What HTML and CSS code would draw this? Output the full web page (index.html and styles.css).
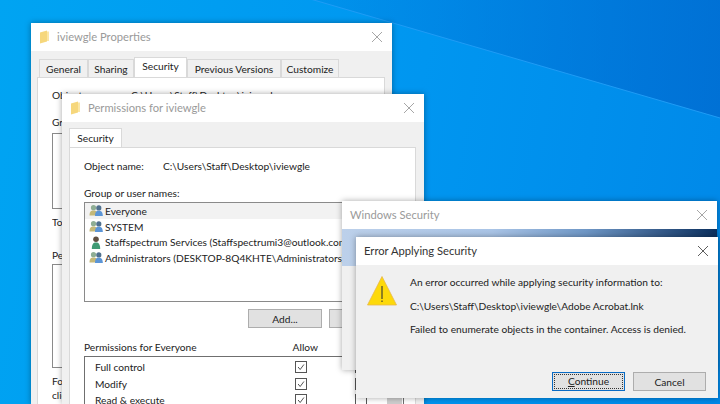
FILE: index.html
```html
<!DOCTYPE html>
<html lang="en">
<head>
    <meta charset="UTF-8">
    <title>Error Applying Security</title>
    <link rel="stylesheet" href="styles.css">
</head>
<body>
    <svg class="streak" viewBox="0 0 720 404">
        <defs>
            <linearGradient id="wedge" x1="0" y1="0" x2="1" y2="0">
                <stop offset="0" stop-color="#0060c8" stop-opacity="0.1"/>
                <stop offset="1" stop-color="#0060c8" stop-opacity="0.6"/>
            </linearGradient>
        </defs>
        <polygon points="300,-4 720,118 720,0 300,0" fill="url(#wedge)"/>
        <line x1="300" y1="-4" x2="720" y2="118" stroke="#1f9cf5" stroke-width="1"/>
    </svg>

    <!-- back window -->
    <div class="window props">
        <div class="titlebar dim">
            <svg class="folder" viewBox="0 0 12 14"><path d="M1 2.5 L8 0.5 V11.5 L1 13.5 Z" fill="#f6d77c"/><path d="M8 1.5 H10 V11 H8 Z" fill="#fbe6a4"/></svg>
            <span class="title">iviewgle Properties</span>
            <svg class="close" viewBox="0 0 10 10"><path d="M0 0 L10 10 M10 0 L0 10"/></svg>
        </div>
        <div class="tabs">
            <span class="tab w-general">General</span>
            <span class="tab w-sharing">Sharing</span>
            <span class="tab active w-security">Security</span>
            <span class="tab w-previous">Previous Versions</span>
            <span class="tab w-customize">Customize</span>
        </div>
        <div class="panel props-panel">
            <div class="row-name"><span class="name-label">Object name:</span><span>C:\Users\Staff\Desktop\iviewgle</span></div>
            <p class="cut gr">Group or user names:</p>
            <div class="props-list"></div>
            <p class="cut to">To change permissions</p>
            <p class="cut pe">Permissions for Everyone</p>
            <div class="props-list tall"></div>
            <p class="cut fo">For special permissions</p>
            <p class="cut">click Advanced.</p>
        </div>
    </div>

    <!-- permissions window -->
    <div class="window perms">
        <div class="titlebar dim">
            <svg class="folder" viewBox="0 0 12 14"><path d="M1 2.5 L8 0.5 V11.5 L1 13.5 Z" fill="#f6d77c"/><path d="M8 1.5 H10 V11 H8 Z" fill="#fbe6a4"/></svg>
            <span class="title">Permissions for iviewgle</span>
            <svg class="close" viewBox="0 0 10 10"><path d="M0 0 L10 10 M10 0 L0 10"/></svg>
        </div>
        <div class="tabs perms-tabs">
            <span class="tab active">Security</span>
        </div>
        <div class="panel perms-panel">
            <div class="row-name"><span class="name-label">Object name:</span><span>C:\Users\Staff\Desktop\iviewgle</span></div>
            <p class="group-label">Group or user names:</p>
            <ul class="users">
                <li class="user selected"><svg class="ico"><use href="#group"/></svg>Everyone</li>
                <li class="user"><svg class="ico"><use href="#group"/></svg>SYSTEM</li>
                <li class="user"><svg class="ico"><use href="#single"/></svg>Staffspectrum Services (Staffspectrumi3@outlook.com)</li>
                <li class="user"><svg class="ico"><use href="#group"/></svg>Administrators (DESKTOP-8Q4KHTE\Administrators)</li>
            </ul>
            <div class="add-row">
                <span class="btn">Add...</span>
                <span class="btn">Remove</span>
            </div>
            <div class="perm-head"><span>Permissions for Everyone</span><span class="allow">Allow</span></div>
            <div class="perm-box">
                <div class="perm"><span class="perm-name">Full control</span><svg class="check" viewBox="0 0 12 12"><path d="M2.5 6 L5 9 L9.5 3"/></svg><span class="deny"></span></div>
                <div class="perm"><span class="perm-name">Modify</span><svg class="check" viewBox="0 0 12 12"><path d="M2.5 6 L5 9 L9.5 3"/></svg><span class="deny"></span></div>
                <div class="perm"><span class="perm-name">Read &amp; execute</span><svg class="check" viewBox="0 0 12 12"><path d="M2.5 6 L5 9 L9.5 3"/></svg><span class="deny"></span></div>
                <div class="thumb"></div>
            </div>
        </div>
    </div>

    <!-- windows security -->
    <div class="window winsec">
        <div class="titlebar dim">
            <span class="title">Windows Security</span>
            <svg class="close" viewBox="0 0 10 10"><path d="M0 0 L10 10 M10 0 L0 10"/></svg>
        </div>
        <div class="band"></div>
    </div>

    <!-- error dialog -->
    <div class="window error">
        <div class="titlebar">
            <span class="title">Error Applying Security</span>
            <svg class="close dark" viewBox="0 0 10 10"><path d="M0 0 L10 10 M10 0 L0 10"/></svg>
        </div>
        <div class="error-body">
            <div class="msg-row">
                <svg class="warn" viewBox="0 0 30 30">
                    <path d="M15 0.5 L29.5 29 H0.5 Z" fill="#fdd90a" stroke="#e8b84a" stroke-width="0.8"/>
                    <path d="M15 10 V23" stroke="#333" stroke-width="1.1"/>
                    <path d="M15 24.5 V26" stroke="#333" stroke-width="1.1"/>
                </svg>
                <div class="msgs">
                    <p>An error occurred while applying security information to:</p>
                    <p>C:\Users\Staff\Desktop\iviewgle\Adobe Acrobat.lnk</p>
                    <p>Failed to enumerate objects in the container. Access is denied.</p>
                </div>
            </div>
            <div class="actions">
                <span class="btn primary"><span class="focus"><u>C</u>ontinue</span></span>
                <span class="btn">Cancel</span>
            </div>
        </div>
    </div>

    <svg class="defs" width="0" height="0">
        <symbol id="group" viewBox="0 0 14 12">
            <circle cx="4.5" cy="3.2" r="2.6" fill="#8fae94"/>
            <path d="M0.5 11 C0.5 7 2 6 4.5 6 C7 6 8.5 7 8.5 11 Z" fill="#c4b878"/>
            <circle cx="9.8" cy="3.4" r="2.6" fill="#4f708e"/>
            <path d="M6 11.5 C6 7.5 7.5 6.3 9.8 6.3 C12 6.3 13.8 7.5 13.8 11.5 Z" fill="#5b95d6"/>
        </symbol>
        <symbol id="single" viewBox="0 0 14 14">
            <circle cx="7" cy="3.5" r="3" fill="#5f4f40"/>
            <path d="M2.5 14 C2.5 9 4 7 7 7 C10 7 11.5 9 11.5 14 Z" fill="#3f9a74"/>
        </symbol>
    </svg>
</body>
</html>
```
FILE: styles.css
```css
html, body {
    margin: 0;
    padding: 0;
}
body {
    width: 720px;
    height: 404px;
    overflow: hidden;
    position: relative;
    font-family: Lato, sans-serif;
    font-size: 10.2px;
    line-height: 14px;
    color: #222;
    background: linear-gradient(100deg, #00a4f2 0%, #0096f0 55%, #0088e8 100%);
}
p {
    margin: 0;
}
.streak {
    position: absolute;
    left: 0;
    top: 0;
    width: 720px;
    height: 404px;
}
.defs {
    position: absolute;
}
.window {
    position: absolute;
    background: #f0f0f0;
    box-shadow: 0 0 6px rgba(0, 0, 0, 0.35);
    overflow: hidden;
}
.props {
    left: 31px;
    top: 23px;
    width: 361px;
    height: 381px;
}
.perms {
    left: 62px;
    top: 94px;
    width: 362px;
    height: 310px;
}
.winsec {
    left: 342px;
    top: 201px;
    width: 375px;
    height: 169px;
}
.error {
    left: 356px;
    top: 237px;
    width: 362px;
    height: 161px;
}
.titlebar {
    height: 28px;
    background: #fff;
    display: flex;
    align-items: center;
    padding: 0 8px;
    font-size: 11.2px;
}
.dim .title {
    color: #9a9a9a;
}
.folder {
    width: 12px;
    height: 14px;
    margin-right: 6px;
}
.title {
    flex: 1;
}
.close {
    width: 10px;
    height: 10px;
    margin-right: 2px;
    fill: none;
    stroke: #8f8f8f;
    stroke-width: 0.8;
}
.close.dark {
    stroke: #333;
}
.tabs {
    display: flex;
    align-items: flex-end;
    height: 26px;
    padding-left: 8px;
}
.tab {
    height: 18px;
    line-height: 18px;
    text-align: center;
    background: #f0f0f0;
    border: 1px solid #d9d9d9;
    border-bottom: none;
    box-sizing: border-box;
}
.tab.active {
    height: 20px;
    line-height: 17px;
    background: #fff;
}
.w-general {
    width: 49px;
}
.w-sharing {
    width: 46px;
}
.w-security {
    width: 53px;
}
.w-previous {
    width: 94px;
}
.w-customize {
    width: 58px;
}
.panel {
    background: #fff;
    border: 1px solid #d9d9d9;
    box-sizing: border-box;
}
.props-panel {
    margin: 0 7px 0 6px;
    height: 340px;
    padding: 10px 14px;
}
.row-name {
    display: flex;
}
.name-label {
    width: 79px;
}
.cut {
    width: 11px;
    overflow: hidden;
    white-space: nowrap;
}
.gr {
    margin-top: 13px;
}
.props-list {
    width: 300px;
    height: 74px;
    margin-top: 4px;
    border: 1px solid #8a8a8a;
}
.props-list.tall {
    height: 102px;
    margin-top: 2px;
}
.to {
    margin-top: 6px;
}
.pe {
    margin-top: 19px;
}
.fo {
    margin-top: 6px;
}
.perms-tabs {
    height: 25px;
    padding-left: 7px;
}
.perms-tabs .tab {
    height: 19px;
    width: 53px;
    line-height: 18px;
}
.perms-panel {
    margin: 0 8px 0 7px;
    height: 290px;
    padding: 11px 14px;
}
.group-label {
    margin-top: 13px;
}
.users {
    list-style: none;
    margin: 2px 0 0;
    padding: 0;
    height: 98px;
    width: 318px;
    border: 1px solid #8a8a8a;
    overflow: hidden;
}
.user {
    display: flex;
    align-items: center;
    height: 15.7px;
    padding-left: 4px;
    white-space: nowrap;
}
.user.selected {
    background: #f2f2f2;
}
.ico {
    width: 14px;
    height: 13px;
    margin-right: 2px;
    flex: none;
}
.add-row {
    display: flex;
    gap: 7px;
    margin: 7px 0 0 164px;
}
.btn {
    display: flex;
    align-items: center;
    justify-content: center;
    width: 74px;
    height: 19px;
    background: #e1e1e1;
    border: 1px solid #adadad;
    box-sizing: border-box;
    flex: none;
}
.perm-head {
    display: flex;
    justify-content: space-between;
    width: 234px;
    margin-top: 12px;
}
.perm-box {
    position: relative;
    margin-top: 2px;
    width: 318px;
    height: 70px;
    border: 1px solid #6f6f6f;
    padding-top: 2px;
}
.perm {
    display: flex;
    align-items: center;
    height: 16.5px;
    padding-left: 10px;
}
.perm-name {
    width: 200px;
}
.check {
    width: 12px;
    height: 12px;
    border: 1px solid #555;
    box-sizing: border-box;
    fill: none;
    stroke: #333;
    stroke-width: 1;
    flex: none;
}
.deny {
    width: 12px;
    height: 12px;
    margin-left: 48px;
    border: 1px solid #555;
    box-sizing: border-box;
    flex: none;
}
.thumb {
    position: absolute;
    right: 1px;
    top: 40px;
    width: 15px;
    height: 30px;
    background: #cdcdcd;
}
.band {
    height: 37px;
    background: linear-gradient(90deg, #bcd0ea 0%, #a9c4e6 40%, #6f97c6 65%, #0b2f5e 100%);
}
.error .titlebar {
    color: #333;
}
.error-body {
    box-sizing: border-box;
    height: 133px;
    padding: 11px 12px 7px 11px;
    display: flex;
    flex-direction: column;
    justify-content: space-between;
}
.msg-row {
    display: flex;
}
.warn {
    width: 30px;
    height: 30px;
    flex: none;
    margin-right: 13px;
}
.msgs {
    display: flex;
    flex-direction: column;
    gap: 9.6px;
    margin-top: -1px;
    white-space: nowrap;
}
.actions {
    display: flex;
    justify-content: flex-end;
    gap: 8px;
}
.actions .btn {
    width: 73px;
}
.btn.primary {
    border: 1px solid #0a6bc4;
    padding: 1px;
}
.focus {
    flex: 1;
    align-self: stretch;
    text-align: center;
    border: 1px dotted #333;
    line-height: 13px;
}
```
